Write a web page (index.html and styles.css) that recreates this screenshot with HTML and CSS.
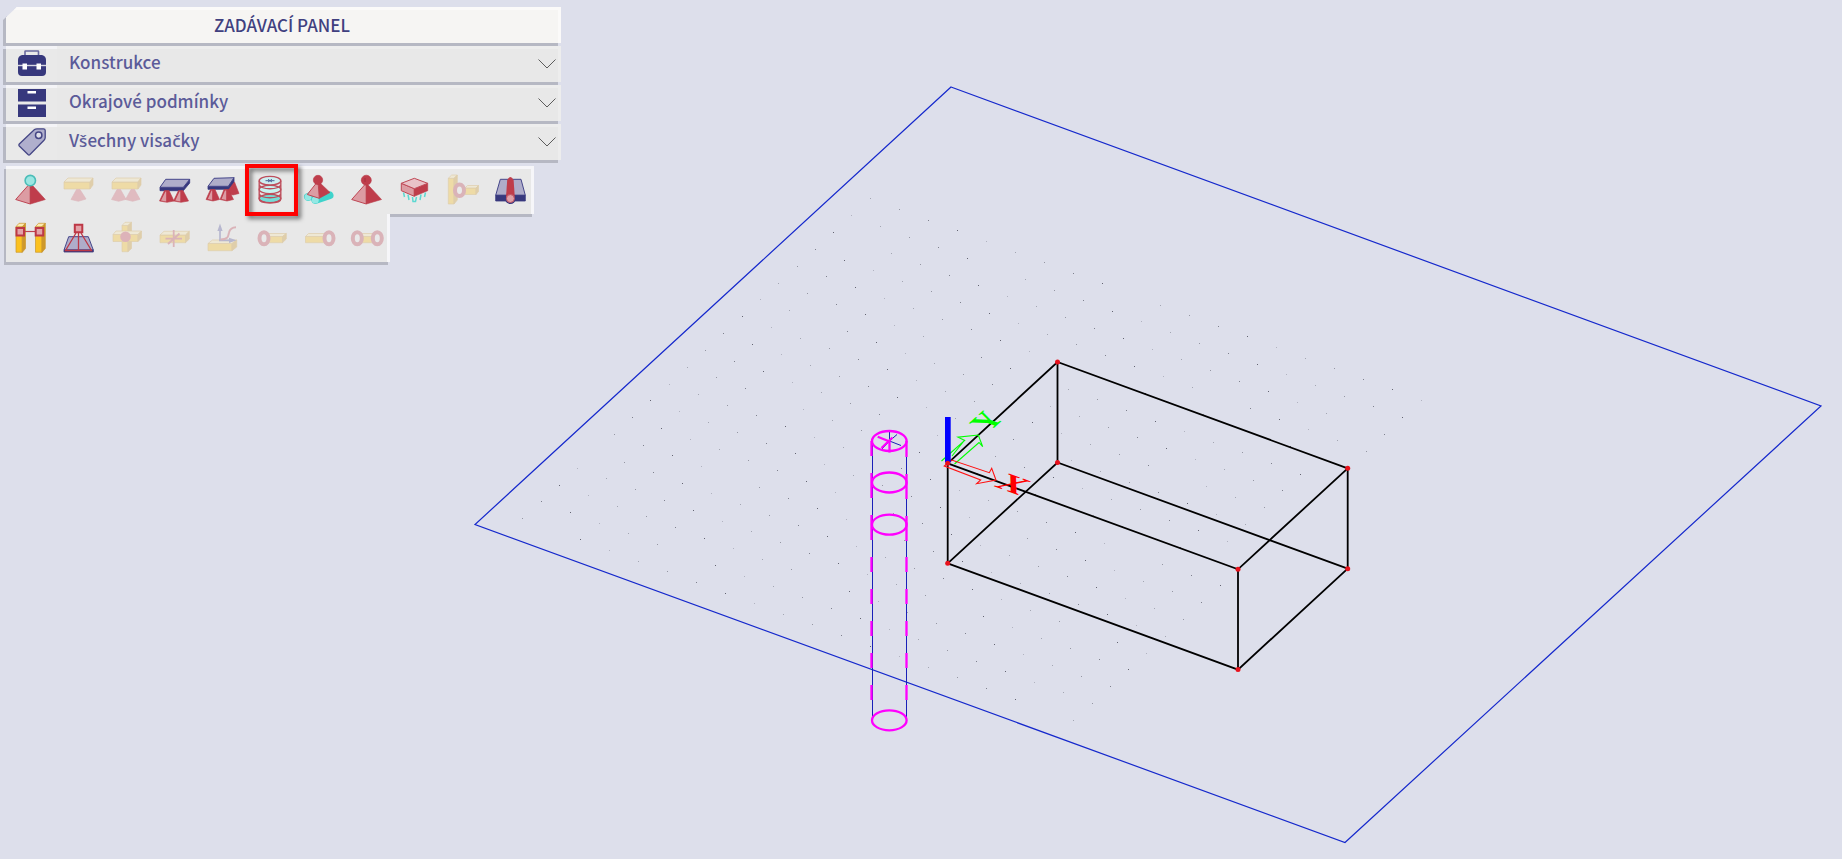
FILE: index.html
```html
<!DOCTYPE html>
<html lang="cs">
<head>
<meta charset="utf-8">
<title>Zadávací panel</title>
<link rel="stylesheet" href="styles.css">
</head>
<body>
<main class="workspace">
  <svg class="scene" viewBox="0 0 1842 859" preserveAspectRatio="xMinYMin meet" role="img" aria-label="3D model">
    <g id="grid" class="grid"></g>
    <path class="plane" d="M951 87 L1821 406 L1345 842.500 L475 524.500 Z"/>
    <g class="box">
      <path d="M947.700 463.300 L1057.500 362 L1347.700 468.300 L1238 569.300 Z"/>
      <path d="M947.700 563.300 L1057.500 462.500 L1347.700 568.700 L1238 669.600 Z"/>
      <path d="M947.700 463.300 V563.300 M1057.500 362 V462.500 M1347.700 468.300 V568.700 M1238 569.300 V669.600"/>
    </g>
    <g class="pile-lines">
      <path d="M872.500 441 V720 M906.500 441 V720"/>
      <path d="M889.500 431 V441 L897 434.500 M889.500 441 L901 445.500 M889.500 441 L882 449"/>
    </g>
    <g class="pile">
      <ellipse cx="889.300" cy="441" rx="17.300" ry="10"/>
      <ellipse cx="889.300" cy="482.500" rx="17.300" ry="10"/>
      <ellipse cx="889.300" cy="524.700" rx="17.300" ry="10"/>
      <ellipse cx="889.300" cy="720.300" rx="17.300" ry="10"/>
      <path d="M871.500 441 V456 M871.500 473 V498 M871.500 515 V540 M871.500 557 V572 M871.500 589 V604 M871.500 621 V636 M871.500 653 V668 M871.500 685 V700"/>
      <path d="M906.500 441 V457 M906.500 474 V499 M906.500 516 V541 M906.500 557 V572 M906.500 589 V604 M906.500 621 V636 M906.500 653 V668 M906.500 685 V700"/>
      <path d="M877.700 436.700 L889.500 441.500 V452.500 M881.500 448 L892.500 437.500"/>
    </g>
    <path class="axis-y" d="M952 456 L964.700 440 M941.500 461 L964.700 440.500 L958 437.200 L978.300 435 L982.700 446.700 L979 442.500 L954.500 464"/>
    <path class="axis-x" d="M944.300 466 L951.700 460 L989.300 472.700 L991.700 468.300 L996 480 L976.700 483.700 L980.700 480 Z"/>
    <path class="axis-z" d="M945 417 H950.700 V462.500 H945 Z"/>
    <g class="nodes">
      <circle cx="947.700" cy="463.300" r="2.500"/><circle cx="1057.500" cy="362" r="2.500"/>
      <circle cx="1347.700" cy="468.300" r="2.500"/><circle cx="1238" cy="569.300" r="2.500"/>
      <circle cx="947.700" cy="563.300" r="2.500"/><circle cx="1057.500" cy="462.500" r="2.500"/>
      <circle cx="1347.700" cy="568.700" r="2.500"/><circle cx="1238" cy="669.600" r="2.500"/>
    </g>
    <!-- axis letters lie in the ground plane -->
    <text class="letter letter-y" transform="matrix(.59 -.54 .94 .34 987 421)" y="11">Y</text>
    <text class="letter letter-x" transform="matrix(.94 .34 -.59 .54 1013 484)" y="12">X</text>
  </svg>

  <aside class="panel">
    <h1 class="panel-title">ZADÁVACÍ PANEL</h1>
    <button class="section" type="button">
      <span class="section-icon"><svg viewBox="0 0 28 28" aria-hidden="true">
        <path d="M7 6 V1.500 Q7 1 7.500 1 H20 Q20.500 1 20.500 1.500 V6" fill="none" stroke="#6a699f" stroke-width="1.600"/>
        <path d="M4 5 H24 Q28 6 28 10 V22 Q28 26 24 26 H4 Q0 26 0 22 V10 Q0 6 4 5 Z" fill="#37387d"/>
        <path d="M0 15.500 H28" stroke="#d8d8e2" stroke-width="1.400"/>
        <path d="M4.500 13.500 h4.500 v6 h-4.500 z M18.500 13.500 h4.500 v6 h-4.500 z" fill="#fff"/></svg></span>
      <span class="section-name">Konstrukce</span>
      <svg class="chevron" viewBox="0 0 18 10" aria-hidden="true"><path d="M.5 .5 L9 9 L17.500 .5"/></svg>
    </button>
    <button class="section" type="button">
      <span class="section-icon"><svg viewBox="0 0 28 28" aria-hidden="true">
        <path d="M0 0 H28 V12.500 H0 Z M0 15.500 H28 V28 H0 Z" fill="#37387d"/>
        <path d="M9.500 2 h8.500 v2.500 h-8.500 z M9.500 17.500 h8.500 v2.500 h-8.500 z" fill="#fff"/></svg></span>
      <span class="section-name">Okrajové podmínky</span>
      <svg class="chevron" viewBox="0 0 18 10" aria-hidden="true"><path d="M.5 .5 L9 9 L17.500 .5"/></svg>
    </button>
    <button class="section" type="button">
      <span class="section-icon"><svg viewBox="0 0 28 28" aria-hidden="true">
        <path d="M16.500 1.500 Q17.500 .8 19 .8 H25.500 Q27.200 .8 27.200 2.500 V9.500 Q27.200 11 26 12.200 L12 26.500 Q11 27.400 10 26.500 L1.300 18 Q.5 17 1.300 16 Z" fill="#b0afcd" stroke="#454685" stroke-width="1.300"/>
        <circle cx="20.700" cy="7.300" r="3.200" fill="#e0e0ea" stroke="#454685" stroke-width="1.500"/></svg></span>
      <span class="section-name">V<span class="caron">š</span>echny visa<span class="caron">č</span>ky</span>
      <svg class="chevron" viewBox="0 0 18 10" aria-hidden="true"><path d="M.5 .5 L9 9 L17.500 .5"/></svg>
    </button>

    <div class="tools" role="toolbar" aria-label="Všechny visačky">
      <div class="tool-row">
        <button class="tool" type="button" aria-label="Bodová podpora"><svg viewBox="0 0 48 48">
          <path class="rl" d="M24.300 17 L9.700 33.500 L24.300 38 Z"/><path class="rd" d="M24.300 17 L39.300 33.500 L24.300 38 Z"/>
          <circle cx="24.300" cy="14.600" r="5.200" fill="#9be6e2" stroke="#4bbdb8" stroke-width="1.600"/></svg></button>
        <button class="tool" type="button" disabled aria-label="Podpora prutu"><svg viewBox="0 0 48 48">
          <path class="yf" d="M10 16 H36 V23 H10 Z"/><path class="yt" d="M10 16 L14 12 H39 L36 16 Z"/><path class="ys" d="M36 16 L39 12 V19 L36 23 Z"/>
          <path class="ro" d="M22.500 23.500 L17 33.500 L24.300 35.300 L32 33 L26 23.500 Z"/></svg></button>
        <button class="tool" type="button" disabled aria-label="Podpora linie"><svg viewBox="0 0 48 48">
          <path class="yf" d="M10 16 H36 V23 H10 Z"/><path class="yt" d="M10 16 L14 12 H39 L36 16 Z"/><path class="ys" d="M36 16 L39 12 V19 L36 23 Z"/>
          <path class="ro" d="M15 23.500 L9.500 33.500 L16.700 35.300 L24 33.300 L18.500 23.500 Z"/><path class="ro" d="M29 23.500 L23.500 33.500 L30.700 35.300 L38 33.300 L32.500 23.500 Z"/></svg></button>
        <button class="tool" type="button" aria-label="Podpora hrany"><svg viewBox="0 0 48 48">
          <path class="nd" d="M10 21.300 H33.300 L39.700 13.300 V17 L33.300 24.700 H10 Z"/><path class="nl" d="M10 21.300 L15.700 13.300 H39.700 L33.300 21.300 Z"/>
          <path class="rd" d="M14.500 24.500 H19 L24 35 L17 36.300 L9.500 35 Z"/><path class="rp" d="M15.500 25.500 L11 34.500 L16.200 35.500 V25.500 Z"/>
          <path class="rd" d="M28.500 24.500 H33 L38.500 35 L31 36.300 L23.500 35 Z"/><path class="rp" d="M29.500 25.500 L25.300 34.500 L30.300 35.500 V25.500 Z"/></svg></button>
        <button class="tool" type="button" aria-label="Podpora plochy"><svg viewBox="0 0 48 48">
          <path class="rd" d="M33 16 H36.500 L41 27.500 L35 29 L28 27.500 Z"/>
          <path class="nd" d="M10 20.300 H30.300 L36 11.700 V15.500 L30.300 23.300 H10 Z"/><path class="nl" d="M10 20.300 L16 12.300 L36 11.700 L30.300 20.300 Z"/>
          <path class="rd" d="M12.500 23.500 H17 L21.500 33.500 L15 35 L8 33.500 Z"/><path class="rp" d="M13.500 24.500 L9.800 33 L14.200 34 V24.500 Z"/>
          <path class="rd" d="M26 23.500 H30.500 L35.500 33.500 L29 35 L22 33.500 Z"/><path class="rp" d="M27 24.500 L23.600 33 L28.200 34 V24.500 Z"/></svg></button>
        <button class="tool tool-marked" type="button" aria-label="Pilota"><svg viewBox="0 0 48 48">
          <path d="M13.200 14.700 V32.700 C13.200 38 34.800 38 34.800 32.700 V14.700 Z" fill="#e3e3e5"/>
          <path d="M13.200 28.500 C17 33 31 33 34.800 28.500 V32.700 C34.800 38.300 13.200 38.300 13.200 32.700 Z" fill="#6edbd5"/>
          <g stroke="#bd4e5c" stroke-width="1.400"><ellipse cx="24" cy="32.500" rx="10.800" ry="4.200" fill="#74dcd7"/><ellipse cx="24" cy="23.500" rx="10.800" ry="4.200" fill="#c8f3f1"/><ellipse cx="24" cy="14.700" rx="10.800" ry="4.300" fill="#cdeef0"/>
          <path d="M13.200 14.700 V32.700 C13.200 38.300 34.800 38.300 34.800 32.700 V14.700 M13.200 19 C16 24 32 24 34.800 19 M13.200 28 C16 33 32 33 34.800 28" fill="none"/></g>
          <path d="M19.500 14.700 H28.500 M22 13.300 L26 16 M26 13.300 L22 16" stroke="#4c6296" stroke-width="1"/></svg></button>
        <button class="tool" type="button" aria-label="Liniová podpora"><svg viewBox="0 0 48 48">
          <path d="M14 31 L28 26 M21.300 34 L35.500 29.300" stroke="#3fd3cb" stroke-width="8" stroke-linecap="round"/>
          <circle cx="14" cy="31" r="3.500" fill="#94e8e4"/><circle cx="21.300" cy="34" r="3.500" fill="#94e8e4"/>
          <path class="rd" d="M24 15 L36 26.500 L25.300 32.300 Z"/><path class="rl" d="M24 15 L13.300 28.500 L25.300 32.300 Z"/><circle class="rd" cx="24" cy="14" r="4.700"/></svg></button>
        <button class="tool" type="button" aria-label="Tuhá podpora"><svg viewBox="0 0 48 48">
          <path class="rl" d="M24.300 17 L9.700 33.500 L24.300 38 Z"/><path class="rd" d="M24.300 17 L39.500 33.500 L24.300 38 Z"/><circle class="rd" cx="24.300" cy="14.200" r="5"/><path d="M23 12 V16" stroke="#a3303e" stroke-width="1"/></svg></button>
        <button class="tool" type="button" aria-label="Podloží"><svg viewBox="0 0 48 48">
          <path class="rl" d="M11.300 17.300 L24.300 22.700 V30.300 L11.300 24.700 Z"/><path class="rd" d="M37.700 17.300 L24.300 22.700 V30.300 L37.700 24.700 Z"/><path d="M11.300 17.300 L24.300 12.300 L37.700 17.300 L24.300 22.700 Z" fill="#e9c3c8" stroke="#c04a57"/>
          <path d="M13.500 26.500 L14.500 31 M18 28.500 L19 34 M22.500 31 L23 35.500 H25.500 L26.500 31 M31 28.500 L30 34 M35.500 26.500 L34.500 31" fill="none" stroke="#5cd8d1" stroke-width="1.500"/></svg></button>
        <button class="tool" type="button" disabled aria-label="Kloub prutu"><svg viewBox="0 0 48 48">
          <path class="yf" d="M27 22 H38 V28.500 H27 Z"/><path class="yt" d="M27 22 L29.500 19.500 H40.500 L38 22 Z"/><path class="ys" d="M38 22 L40.500 19.500 V25.500 L38 28.500 Z"/>
          <path class="yf" d="M10.300 12.300 H16 V38 H10.300 Z"/><path class="yt" d="M10.300 12.300 L13.700 9 H19.300 L16 12.300 Z"/><path class="ys" d="M16 12.300 L19.300 9 V34 L16 38 Z"/>
          <ellipse class="ring" cx="21.500" cy="24.300" rx="4.500" ry="5.800"/></svg></button>
        <button class="tool" type="button" aria-label="Liniový kloub"><svg viewBox="0 0 48 48">
          <path class="nl" d="M14.300 13.300 H35 L39.300 29.300 H9.700 Z"/><path class="nd" d="M9.700 29.300 H39.300 V35 H9.700 Z"/>
          <circle cx="24.400" cy="32.700" r="5.300" fill="#37387d"/><path d="M21.200 14 Q24.400 8 27.600 14 L28.800 31 H20 Z" fill="#bf3d4b"/>
          <circle cx="24.400" cy="32.500" r="4" fill="#dfa0a8" stroke="#bf5261"/></svg></button>
      </div>
      <div class="tool-row tool-row-short">
        <button class="tool" type="button" aria-label="Vazba uzlů"><svg viewBox="0 0 48 48">
          <path class="yf" d="M10 12.700 H16.300 V38.300 H10 Z M29.500 12.700 H36 V38.300 H29.500 Z"/><path class="yt" d="M10 12.700 L13 9.300 H19.500 L16.300 12.700 Z M29.500 12.700 L32.500 9.300 H39.300 L36 12.700 Z"/><path class="ys" d="M16.300 12.700 L19.500 9.300 V34.500 L16.300 38.300 Z M36 12.700 L39.300 9.300 V34.500 L36 38.300 Z"/>
          <path d="M18 17.500 H30" stroke="#bd4350" stroke-width="1.200"/><path d="M10.500 14 h7.500 v7.500 h-7.500 z M29.700 14 h7.500 v7.500 h-7.500 z" fill="#e3a2a8" stroke="#bd3846" stroke-width="2"/></svg></button>
        <button class="tool" type="button" aria-label="Vazba uzlu na plochu"><svg viewBox="0 0 48 48">
          <path class="nl" d="M14.700 22.700 H34.300 L39.300 36 H10 Z"/><path class="nd" d="M10 36 H39.300 V38 H10 Z"/>
          <path d="M22 19 L11.500 36.500 H37.500 L27 19 M24.500 19 V36.500" fill="none" stroke="#bd3846" stroke-width="1.300"/><path d="M20.800 10.800 h7.500 v7.500 h-7.500 z" fill="#e3a2a8" stroke="#bd3846" stroke-width="2"/></svg></button>
        <button class="tool" type="button" disabled aria-label="Křížení prutů"><svg viewBox="0 0 48 48">
          <path class="yf" d="M20 11.500 H26 V37.700 H20 Z"/><path class="yt" d="M20 11.500 L23 8.300 H29.500 L26 11.500 Z"/><path class="ys" d="M26 11.500 L29.500 8.300 V34.500 L26 37.700 Z"/>
          <path class="yf" d="M11 20.500 H36 V27.500 H11 Z"/><path class="yt" d="M11 20.500 L14 17 H39.500 L36 20.500 Z"/><path class="ys" d="M36 20.500 L39.500 17 V24 L36 27.500 Z"/>
          <circle cx="23.500" cy="22.700" r="5.300" fill="#c8475a"/></svg></button>
        <button class="tool" type="button" disabled aria-label="Průřez"><svg viewBox="0 0 48 48">
          <path class="yf" d="M10 21 H35.500 V28.700 H10 Z"/><path class="yt" d="M10 21 L14 17.300 H39.300 L35.500 21 Z"/><path class="ys" d="M35.500 21 L39.300 17.300 V25 L35.500 28.700 Z"/>
          <path d="M23.700 16 V33 M15.500 24.700 H32 M18 30 L29.500 19.500" stroke="#bd4557" stroke-width="1.800"/></svg></button>
        <button class="tool" type="button" disabled aria-label="Nelinearita"><svg viewBox="0 0 48 48">
          <path class="yf" d="M10 29.500 H34 V36.700 H10 Z"/><path class="yt" d="M10 29.500 L14.500 26 H38.700 L34 29.500 Z"/><path class="ys" d="M34 29.500 L38.700 26 V33 L34 36.700 Z"/>
          <path d="M22 27 V14 M21 26.300 H33" stroke="#51529b" stroke-width="1.700"/><path d="M22 9.500 L24.600 17 H19.400 Z M38.500 26.300 L31 23.700 V29 Z" fill="#51529b"/>
          <path d="M22.500 25.500 C31 25 30 22 31 18.500 C32 14.500 34 13.500 38 13.300" fill="none" stroke="#bd4557" stroke-width="2"/></svg></button>
        <button class="tool" type="button" disabled aria-label="Kloub na začátku"><svg viewBox="0 0 48 48">
          <path class="yf" d="M18 22.500 H36.500 V28.700 H18 Z"/><path class="yt" d="M18 22.500 L20 19.500 H40.300 L36.500 22.500 Z"/><path class="ys" d="M36.500 22.500 L40.300 19.500 V25 L36.500 28.700 Z"/><ellipse class="ring" cx="18" cy="24.300" rx="4.500" ry="6"/></svg></button>
        <button class="tool" type="button" disabled aria-label="Kloub na konci"><svg viewBox="0 0 48 48">
          <path class="yf" d="M11.500 22.500 H33 V28.700 H11.500 Z"/><path class="yt" d="M11.500 22.500 L14.500 19.500 H34 L33 22.500 Z"/><ellipse class="ring" cx="35" cy="24.300" rx="4.500" ry="6"/></svg></button>
        <button class="tool" type="button" disabled aria-label="Klouby na obou koncích"><svg viewBox="0 0 48 48">
          <path class="yf" d="M16 22.500 H34 V28.700 H16 Z"/><path class="yt" d="M16 22.500 L18 19.500 H34 V22.500 Z"/><ellipse class="ring" cx="15.300" cy="24.300" rx="4.500" ry="6"/><ellipse class="ring" cx="35.300" cy="24.300" rx="4.500" ry="6"/></svg></button>
      </div>
    </div>
  </aside>
</main>
<script src="grid.js"></script>
</body>
</html>
```
FILE: styles.css
```css
* { box-sizing: border-box; }

body {
  margin: 0;
  background: #dddfeb;
  font-family: "Noto Sans CJK SC", "Noto Sans", sans-serif;
}

.workspace {
  display: grid;
  min-height: 100vh;
  overflow: hidden;
}

.scene, .panel { grid-area: 1 / 1; }

.scene { display: block; width: 100%; }

.grid { fill: #4d4f5c; shape-rendering: crispEdges; }
.plane { fill: none; stroke: #1528cc; stroke-width: 1.2; }
.box { fill: none; stroke: #000; stroke-width: 1.8; }
.pile-lines { fill: none; stroke: #1a20b8; stroke-width: 1; }
.pile { fill: none; stroke: #f0f; stroke-width: 2.3; }
.axis-x { fill: none; stroke: #f11; stroke-width: 1.1; }
.axis-y { fill: none; stroke: #0f0; stroke-width: 1.1; }
.axis-z { fill: #00f; }
.nodes { fill: #e8111c; }
.letter { font: bold 37px "Liberation Serif", serif; text-anchor: middle; }
.letter-x { fill: #f00; }
.letter-y { fill: #0f0; font-size: 35px; }

.panel {
  z-index: 1;
  align-self: start;
  display: flex;
  flex-direction: column;
  gap: 3px;
  width: 552px;
  max-width: calc(100vw - 12px);
  margin: 7px 6px;
}

.panel-title {
  height: 36px;
  margin: 0;
  border-top: 3px solid #fbfaf9;
  background: #f6f5f3;
  box-shadow: 3px 0 #fbfaf9, 0 3px #b6b8c3, -3px 3px #b6b8c3;
  clip-path: polygon(11px 0, calc(100% + 3px) 0, calc(100% + 3px) calc(100% + 3px), -3px calc(100% + 3px), -3px 13px);
  color: #40407f;
  font-size: 17px;
  font-weight: 500;
  line-height: 30px;
  text-align: center;
}

.section {
  display: flex;
  height: 36px;
  padding: 0;
  border: 0;
  background: linear-gradient(#ededed 3px, #e8e8e8 3px);
  box-shadow: 3px 0 #ededed, 0 3px #b6b8c3, -3px 3px #b6b8c3;
  color: #5b5b99;
  font: inherit;
  font-size: 17px;
  font-weight: 500;
  line-height: 32px;
  text-align: left;
}

.section-icon {
  flex: none;
  width: 51px;
  height: 36px;
  padding: 4px 11px 4px 12px;
  background: linear-gradient(#f4f4f7 3px, #e9e9e9 3px);
}
.section-icon svg { display: block; width: 28px; height: 28px; }
.section-name { flex: 1; padding-left: 12px; }
.caron { font-family: "Noto Sans", sans-serif; }

.chevron {
  flex: none;
  width: 18px;
  height: 10px;
  margin: 13px 2px 0 0;
  fill: none;
  stroke: #5c5c5c;
  stroke-width: 1;
}

.tools {
  display: flex;
  flex-direction: column;
  align-items: flex-start;
  margin-top: 3px;
}

.tool-row {
  display: flex;
  height: 48px;
  background: linear-gradient(#f6f6f9 3px, #e8e8e8 3px);
  box-shadow: inset -3px 0 #f6f6f9, -2px 3px #b6b8c3;
}
.tool-row-short { background: #e8e8e8; }

.tool {
  width: 48px;
  height: 48px;
  padding: 0;
  border: 0;
  background: none;
}
.tool svg { display: block; width: 48px; height: 48px; }
.tool:disabled svg { opacity: .32; }

.tool-marked { position: relative; }
.tool-marked::after {
  content: "";
  position: absolute;
  inset: -2px -4px -2px -1px;
  z-index: 2;
  border: 4px solid #f00;
  filter: drop-shadow(3px 3px 2px rgba(0, 0, 0, .5));
}

.rd { fill: #bf3d4b; stroke: #b93a48; stroke-width: .6; }
.rl { fill: #dc9ca3; stroke: #bf4654; stroke-width: 1; }
.rp { fill: #dc9ca3; }
.ro { fill: #d0606f; stroke: #c24d5e; stroke-width: .6; }
.nd { fill: #37387d; stroke: #37387d; stroke-width: .8; }
.nl { fill: #afadca; stroke: #45468a; stroke-width: 1; }
.yf { fill: #fbc11f; stroke: #c9962f; stroke-width: .7; }
.yt { fill: #fde9b0; stroke: #c9962f; stroke-width: .7; }
.ys { fill: #cf9829; stroke: #c9962f; stroke-width: .7; }
.ring { fill: #ececec; stroke: #bd4557; stroke-width: 4; }
```
FILE: grid.js
```js
// Snap points of the ground plane: 20 x 20 steps measured from its top corner.
const grid = document.getElementById("grid");
const origin = [951, 87.4];
const stepX = [29, 10.61];
const stepY = [-18.29, 16.83];

for (let i = 1; i <= 20; i++) {
  for (let j = 6; j <= 25; j++) {
    if ((i * 5 + j * 3) % 17 === 0) continue;
    const dot = document.createElementNS("http://www.w3.org/2000/svg", "rect");
    dot.setAttribute("x", Math.floor(origin[0] + i * stepX[0] + j * stepY[0]));
    dot.setAttribute("y", Math.floor(origin[1] + i * stepX[1] + j * stepY[1]));
    dot.setAttribute("width", 1);
    dot.setAttribute("height", 1);
    dot.setAttribute("opacity", [0.4, 0.65, 0.3, 0.5, 0.85][(i * 3 + j * 2) % 5]);
    grid.appendChild(dot);
  }
}
```
